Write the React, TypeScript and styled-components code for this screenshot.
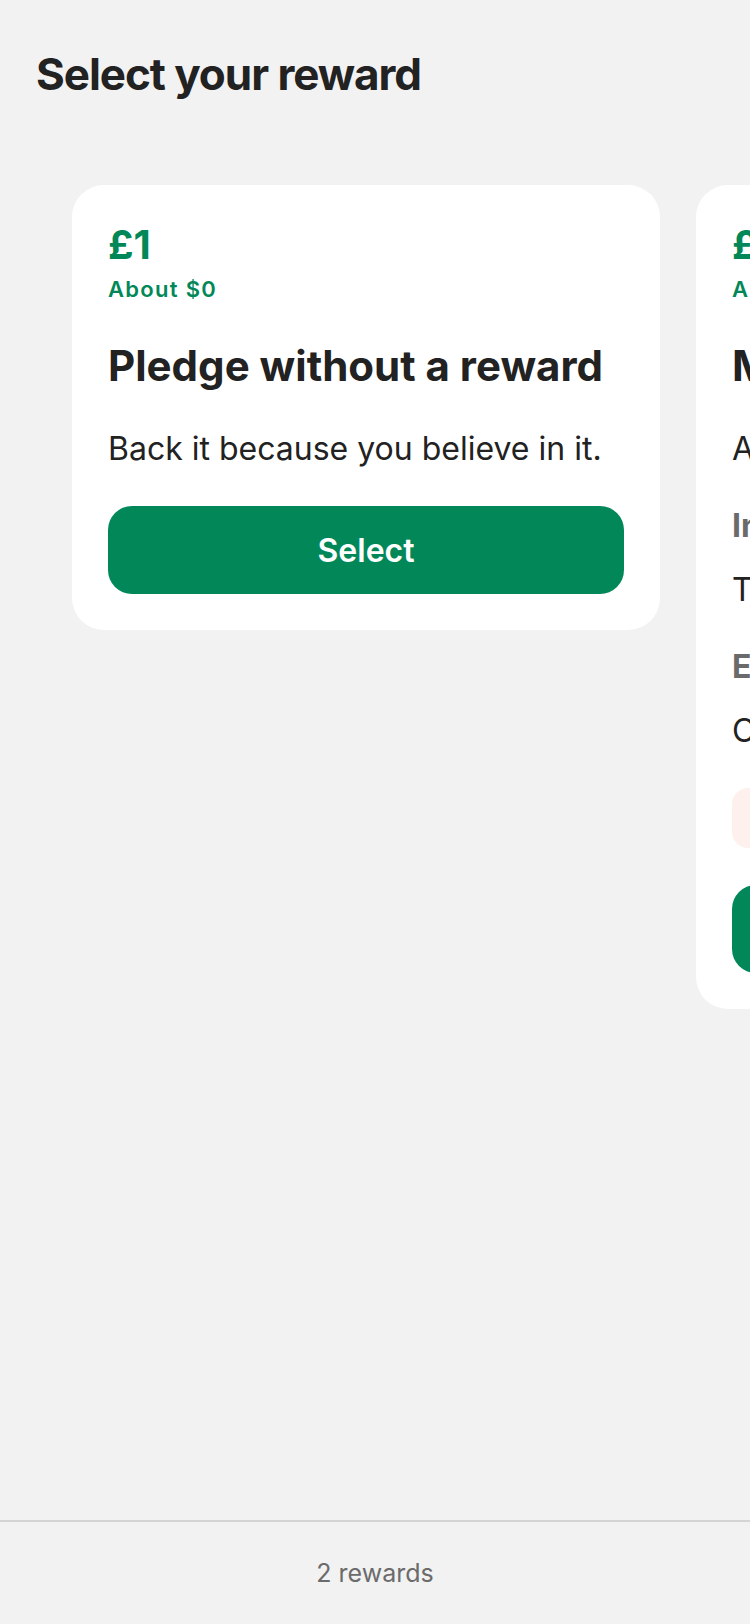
import React from "react";
import styled, { createGlobalStyle } from "styled-components";

const GlobalStyle = createGlobalStyle`
  html, body, #root {
    margin: 0;
    padding: 0;
    height: 100%;
  }
  body {
    background: #f2f2f2;
    font-family: Inter, "Noto Sans", sans-serif;
    color: #222222;
    -webkit-font-smoothing: antialiased;
  }
  * { box-sizing: border-box; }
`;

const Page = styled.div`
  display: flex;
  flex-direction: column;
  min-height: 100%;
  overflow: hidden;
`;

const Header = styled.h1`
  margin: 0;
  padding: 48px 36px 0 36px;
  font-size: 44px;
  line-height: 52px;
  font-weight: 700;
  letter-spacing: -1.05px;
  color: #222222;
`;

const Scroller = styled.div`
  flex: 1;
  display: flex;
  align-items: flex-start;
  gap: 36px;
  padding: 85px 0 0 72px;
  overflow: hidden;
`;

const Card = styled.div`
  flex: 0 0 588px;
  background: #ffffff;
  border-radius: 32px;
  padding: 36px;
  display: flex;
  flex-direction: column;
  gap: 37px;
`;

const PriceBlock = styled.div`
  display: flex;
  flex-direction: column;
  gap: 6px;
`;

const Price = styled.div`
  font-size: 40px;
  line-height: 48px;
  font-weight: 700;
  color: #028858;
`;

const Converted = styled.div`
  font-size: 22px;
  line-height: 28px;
  font-weight: 600;
  letter-spacing: 1.3px;
  color: #028858;
`;

const Title = styled.h2`
  margin: 0;
  font-size: 42px;
  line-height: 52px;
  font-weight: 700;
  letter-spacing: 0;
  color: #222222;
  white-space: nowrap;
`;

const Body = styled.p`
  margin: 0;
  font-size: 32px;
  line-height: 40px;
  font-weight: 400;
  color: #222222;
  white-space: nowrap;
`;

const Section = styled.div`
  display: flex;
  flex-direction: column;
  gap: 24px;
`;

const Label = styled.div`
  font-size: 32px;
  line-height: 40px;
  font-weight: 700;
  color: #6a6a6a;
  white-space: nowrap;
`;

const Notice = styled.div`
  height: 60px;
  border-radius: 16px;
  background: #fef1ed;
  display: flex;
  align-items: center;
  padding: 0 24px;
  font-size: 26px;
  color: #a12c14;
  white-space: nowrap;
`;

const SelectButton = styled.button`
  height: 88px;
  flex: 0 0 88px;
  border: none;
  border-radius: 24px;
  background: #028858;
  color: #ffffff;
  font-family: Inter, "Noto Sans", sans-serif;
  font-size: 32px;
  font-weight: 600;
  cursor: pointer;
`;

const Footer = styled.footer`
  height: 104px;
  border-top: 2px solid #d4d4d4;
  display: flex;
  align-items: center;
  justify-content: center;
  font-size: 25px;
  color: #6b6b6b;
`;

export default function App() {
  return (
    <>
      <GlobalStyle />
      <Page>
        <Header>Select your reward</Header>
        <Scroller>
          <Card>
            <PriceBlock>
              <Price>£1</Price>
              <Converted>About $0</Converted>
            </PriceBlock>
            <Title>Pledge without a reward</Title>
            <Body>Back it because you believe in it.</Body>
            <SelectButton>Select</SelectButton>
          </Card>
          <Card>
            <PriceBlock>
              <Price>£10</Price>
              <Converted>About $13</Converted>
            </PriceBlock>
            <Title>My thanks</Title>
            <Body>A heartfelt thank you.</Body>
            <Section>
              <Label>Includes</Label>
              <Body>Thank-you note</Body>
            </Section>
            <Section>
              <Label>Estimated delivery</Label>
              <Body>Oct 2025</Body>
            </Section>
            <Notice>Only a few left</Notice>
            <SelectButton>Select</SelectButton>
          </Card>
        </Scroller>
        <Footer>2 rewards</Footer>
      </Page>
    </>
  );
}
